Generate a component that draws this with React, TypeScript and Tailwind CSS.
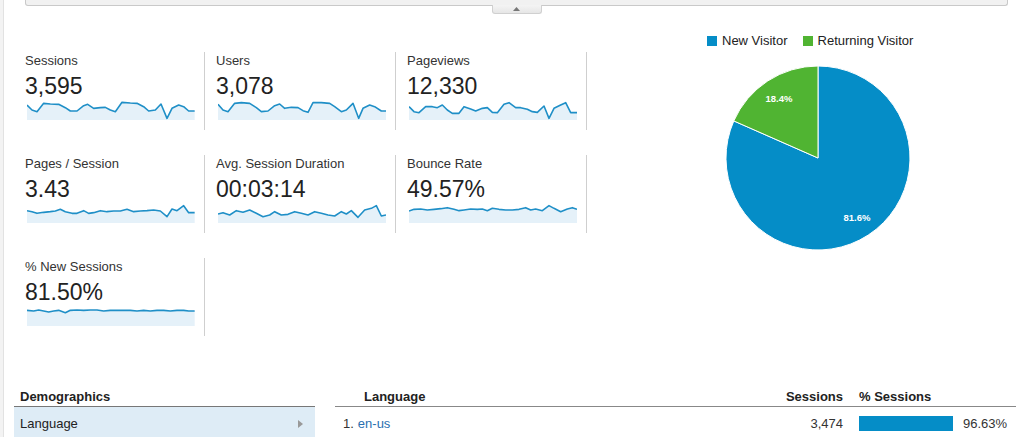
import React from "react";

type SparkProps = { data: number[]; x0: number; y0: number };

function Spark({ data, x0, y0 }: SparkProps) {
  const pts: [number, number][] = [];
  for (let i = 0; i < data.length; i += 2) pts.push([data[i], data[i + 1]]);
  const line = pts.map((p, i) => `${i === 0 ? "M" : "L"}${p[0]},${p[1]}`).join(" ");
  const bottom = y0 + 60;
  const area = `${line} L${pts[pts.length - 1][0]},${bottom} L${pts[0][0]},${bottom} Z`;
  return (
    <svg width="168" height="20" viewBox={`${x0} ${y0} 504 60`} preserveAspectRatio="none" className="block ml-[2px]">
      <path d={area} fill="#e5f1f9" />
      <path d={line} fill="none" stroke="#1f8fc7" strokeWidth="1.6" vectorEffect="non-scaling-stroke" strokeLinejoin="round" />
    </svg>
  );
}

const sessions = [80,195,95,210,110,215,130,190,150,192,175,193,195,203,210,213,230,213,250,197,262,193,280,205,300,203,315,202,330,210,345,215,365,187,390,189,410,190,430,200,445,213,465,210,482,192,500,235,515,205,535,195,550,200,565,213,583,213];
const users = [650,193,665,210,680,215,700,190,720,188,745,190,765,203,780,215,800,213,820,197,835,192,850,205,870,202,890,203,905,212,920,217,935,188,960,188,985,190,1000,200,1020,215,1035,210,1055,190,1072,235,1085,205,1105,195,1120,200,1140,213,1154,213];
const pageviews = [55,200,70,215,85,218,105,200,125,200,140,203,155,195,170,210,185,220,205,220,220,200,240,207,255,213,275,205,290,203,305,217,320,218,340,193,355,188,375,203,390,203,410,208,425,215,440,217,460,198,475,235,490,205,510,195,525,188,540,218,559,218];
const pps = [80,212,95,215,110,220,130,217,150,215,165,213,180,208,195,215,215,220,230,220,250,212,265,220,280,218,300,212,320,215,340,213,360,213,380,208,400,215,420,213,440,212,460,210,480,213,500,230,515,207,530,212,550,197,565,218,583,218];
const dur = [650,222,665,218,685,225,705,212,725,217,745,210,765,220,785,230,805,225,820,215,840,225,860,223,880,215,900,220,920,225,940,215,960,220,980,225,1000,228,1020,215,1035,222,1050,212,1070,232,1090,210,1110,205,1125,197,1140,228,1154,225];
const bounce = [55,213,70,208,90,207,110,210,130,208,150,206,170,203,190,208,205,212,220,210,240,207,260,208,275,207,290,212,305,205,325,208,345,210,365,210,385,208,405,203,420,210,435,207,455,212,475,197,490,205,510,215,530,207,545,203,559,208];
const newSess = [80,178,100,180,115,177,130,180,145,183,160,180,175,178,195,185,210,178,230,177,250,178,270,177,290,177,310,180,330,178,350,178,370,178,390,178,410,180,430,178,450,180,470,178,490,178,510,180,530,178,550,178,565,180,583,180];

function Metric({ label, value, data, x0, y0 }: { label: string; value: string; data: number[]; x0: number; y0: number }) {
  return (
    <div className="h-[78px] pl-[11px] pr-[9px] pt-[1px] border-r border-[#cfcfcf]">
      <div className="text-[13px] leading-[15px] text-[#333]">{label}</div>
      <div className="text-[23px] leading-[25px] mt-[6px] text-[#222]">{value}</div>
      <div className="mt-[1px]">
        <Spark data={data} x0={x0} y0={y0} />
      </div>
    </div>
  );
}

export default function App() {
  return (
    <div className="w-[1016px] h-[437px] overflow-hidden bg-white flex" style={{ fontFamily: '"Liberation Sans", Arial, sans-serif' }}>
      <div className="w-[4px] shrink-0 bg-[#f3f3f3] border-r border-[#e2e2e2]" />
      <div className="flex-1 flex flex-col">
        {/* top collapsed bar */}
        <div className="ml-[21px] mr-[8px] relative">
          <div className="h-[6px] bg-[#f1f1f1] border-x border-b border-[#c9c9c9] rounded-b-[3px]" />
          <div className="flex justify-center -mt-[1px]">
            <div className="w-[50px] h-[9px] border border-t-0 border-[#d0d0d0] rounded-b-[3px] bg-gradient-to-b from-[#f4f4f4] to-[#e6e6e6] flex items-center justify-center">
              <svg width="7" height="4" viewBox="0 0 7 4" className="block">
                <path d="M0,4 L3.5,0 L7,4 Z" fill="#777" />
              </svg>
            </div>
          </div>
        </div>

        <div className="flex items-start">
          {/* metrics */}
          <div className="ml-[10px] mt-[38px] w-[573px] grid grid-cols-3 gap-y-[25px]">
            <Metric label="Sessions" value="3,595" data={sessions} x0={80} y0={180} />
            <Metric label="Users" value="3,078" data={users} x0={650} y0={180} />
            <Metric label="Pageviews" value="12,330" data={pageviews} x0={55} y0={180} />
            <Metric label="Pages / Session" value="3.43" data={pps} x0={80} y0={189} />
            <Metric label="Avg. Session Duration" value="00:03:14" data={dur} x0={650} y0={189} />
            <Metric label="Bounce Rate" value="49.57%" data={bounce} x0={55} y0={189} />
            <Metric label="% New Sessions" value="81.50%" data={newSess} x0={80} y0={165} />
          </div>

          {/* pie */}
          <div className="mt-[19px] flex flex-col">
            <div className="pl-[120px] flex items-center text-[13px] leading-[15px] text-[#222]">
              <span className="w-[10px] h-[10px] bg-[#058dc7]" />
              <span className="ml-[5px]">New Visitor</span>
              <span className="ml-[15px] w-[10px] h-[10px] bg-[#50b432]" />
              <span className="ml-[5px]">Returning Visitor</span>
            </div>
            <div className="pl-[136px] mt-[15px]">
              <svg width="190" height="190" viewBox="0 0 190 190" className="block">
                <path d="M95,95 L95,3 A92,92 0 1,1 10.79,57.93 Z" fill="#058dc7" stroke="#fff" strokeWidth="1" />
                <path d="M95,95 L95,3 A92,92 0 0,0 10.79,57.93 Z" fill="#50b432" stroke="#fff" strokeWidth="1" />
                <text x="56" y="35" textAnchor="middle" dominantBaseline="central" fill="#fff" fontSize="9.5" fontWeight="bold" fontFamily='"Liberation Sans", Arial, sans-serif'>18.4%</text>
                <text x="134" y="154" textAnchor="middle" dominantBaseline="central" fill="#fff" fontSize="9.5" fontWeight="bold" fontFamily='"Liberation Sans", Arial, sans-serif'>81.6%</text>
              </svg>
            </div>
          </div>
        </div>

        {/* bottom tables */}
        <div className="mt-[52px] flex">
          <div className="ml-[10px] w-[301px]">
            <div className="h-[19px] border-b border-[#777] pl-[6px] pt-[1px] text-[13px] leading-[15px] font-bold text-[#222]">Demographics</div>
            <div className="h-[30px] bg-[#deecf6] pl-[6px] pr-[12px] pt-[3px] flex items-center justify-between text-[13px] leading-[15px] text-[#222]">
              <span>Language</span>
              <svg width="5" height="8" viewBox="0 0 5 8" className="block">
                <path d="M0,0 L5,4 L0,8 Z" fill="#999" />
              </svg>
            </div>
          </div>
          <div className="ml-[20px] flex-1">
            <div className="h-[19px] border-b border-[#888] pt-[1px] flex text-[13px] leading-[15px] font-bold text-[#222]">
              <div className="pl-[29px] flex-1">Language</div>
              <div className="w-[100px] pr-[16px] text-right">Sessions</div>
              <div className="w-[157px]">% Sessions</div>
            </div>
            <div className="h-[30px] pt-[3px] flex items-center text-[13px] leading-[15px] text-[#333]">
              <div className="pl-[8px] flex-1 flex">
                <span>1.</span>
                <span className="ml-[4px] text-[#2a6fb0]">en-us</span>
              </div>
              <div className="w-[100px] pr-[16px] text-right">3,474</div>
              <div className="w-[157px] flex items-center">
                <div className="w-[94px] h-[15px] bg-[#058dc7]" />
                <span className="ml-[10px]">96.63%</span>
              </div>
            </div>
          </div>
        </div>
      </div>
    </div>
  );
}
